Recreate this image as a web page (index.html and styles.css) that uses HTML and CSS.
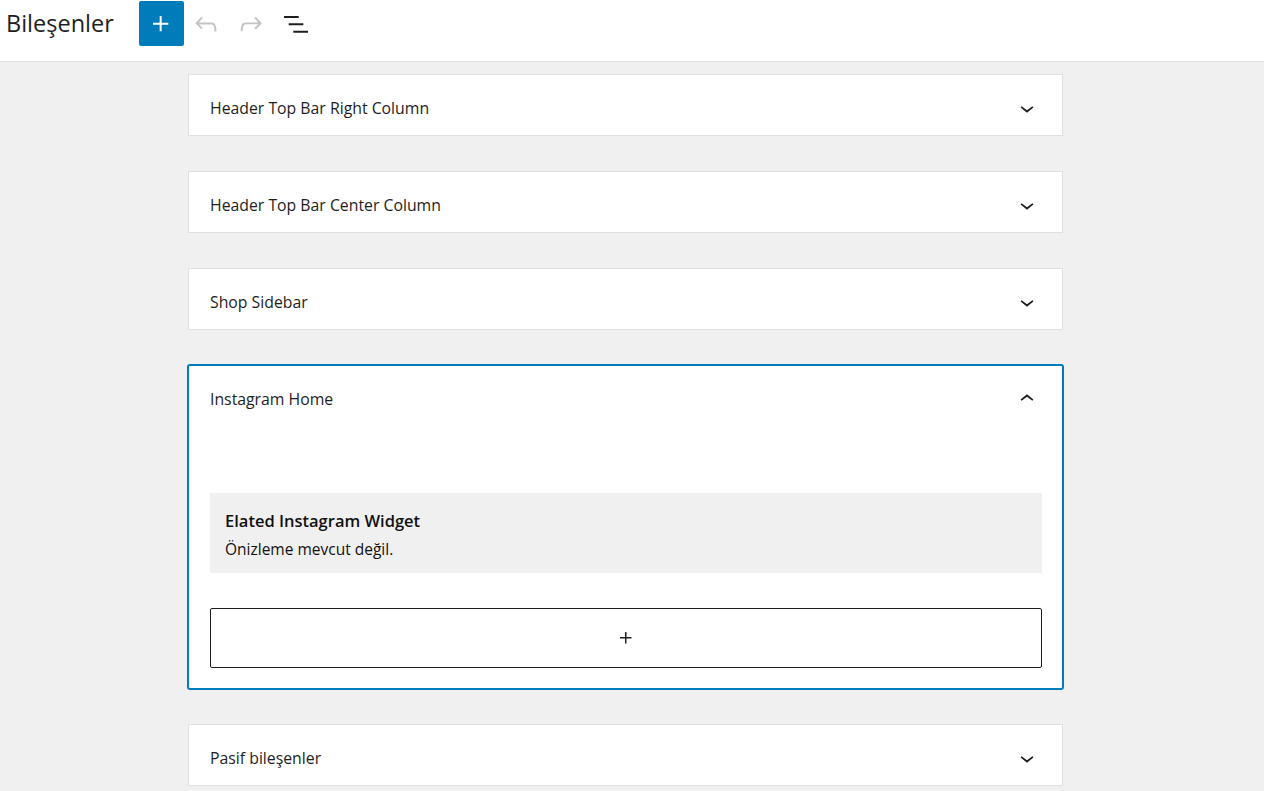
FILE: index.html
```html
<!DOCTYPE html>
<html lang="tr">
<head>
<meta charset="utf-8">
<title>Bileşenler</title>
<link rel="stylesheet" href="styles.css">
</head>
<body>
<header class="topbar">
  <h1 class="topbar-title">Bileşenler</h1>
  <div class="toolbar">
    <button class="tool tool-add" aria-label="Blok ekle">
      <svg viewBox="0 0 24 24" width="32" height="32"><path d="M11 12.5V17.5H12.5V12.5H17.5V11H12.5V6H11V11H6V12.5H11Z"/></svg>
    </button>
    <button class="tool tool-muted" aria-label="Geri al">
      <svg viewBox="0 0 24 24" width="32" height="32"><path d="M18.3 11.7c-.6-.6-1.4-.9-2.3-.9H6.7l2.9-3.3-1.1-1-4.5 5L8.5 16l1-1-2.7-2.7H16c.5 0 .9.2 1.3.5 1 1 1 3.4 1 4.5v.3h1.5v-.2c0-1.5 0-4.3-1.5-5.7z"/></svg>
    </button>
    <button class="tool tool-muted" aria-label="Yinele">
      <svg viewBox="0 0 24 24" width="32" height="32"><path d="M15.6 6.5l-1.1 1 2.9 3.3H8c-.9 0-1.7.3-2.3.9-1.4 1.5-1.4 4.2-1.4 5.6v.2h1.5v-.3c0-1.1 0-3.5 1-4.5.3-.3.7-.5 1.3-.5h9.2L14.5 15l1.1 1.1 4.6-4.6-4.6-5z"/></svg>
    </button>
    <button class="tool" aria-label="Liste görünümü">
      <svg viewBox="0 0 24 24" width="32" height="32"><path d="M3 6h11v1.5H3V6Zm3.5 5.5h11V13h-11v-1.5ZM21 17H10v1.5h11V17Z"/></svg>
    </button>
  </div>
</header>

<main class="editor">
  <div class="areas">
    <section class="area">
      <div class="area-head">
        <span class="area-title">Header Top Bar Right Column</span>
        <svg class="chevron" viewBox="0 0 24 24"><path d="M17.5 11.6L12 16l-5.5-4.4.9-1.2L12 14l4.6-3.6 1 1.2z"/></svg>
      </div>
    </section>

    <section class="area">
      <div class="area-head">
        <span class="area-title">Header Top Bar Center Column</span>
        <svg class="chevron" viewBox="0 0 24 24"><path d="M17.5 11.6L12 16l-5.5-4.4.9-1.2L12 14l4.6-3.6 1 1.2z"/></svg>
      </div>
    </section>

    <section class="area">
      <div class="area-head">
        <span class="area-title">Shop Sidebar</span>
        <svg class="chevron" viewBox="0 0 24 24"><path d="M17.5 11.6L12 16l-5.5-4.4.9-1.2L12 14l4.6-3.6 1 1.2z"/></svg>
      </div>
    </section>

    <section class="area area-open">
      <div class="area-head">
        <span class="area-title">Instagram Home</span>
        <svg class="chevron" viewBox="0 0 24 24"><path d="M6.5 12.4L12 8l5.5 4.4-.9 1.2L12 10l-4.6 3.6-1-1.2z"/></svg>
      </div>
      <div class="area-body">
        <div class="widget-preview">
          <div class="widget-name">Elated Instagram Widget</div>
          <div class="widget-note">Önizleme mevcut değil.</div>
        </div>
        <button class="appender" aria-label="Blok ekle">
          <svg viewBox="0 0 24 24" width="24" height="24"><path d="M11 12.5V17.5H12.5V12.5H17.5V11H12.5V6H11V11H6V12.5H11Z"/></svg>
        </button>
      </div>
    </section>

    <section class="area">
      <div class="area-head">
        <span class="area-title">Pasif bileşenler</span>
        <svg class="chevron" viewBox="0 0 24 24"><path d="M17.5 11.6L12 16l-5.5-4.4.9-1.2L12 14l4.6-3.6 1 1.2z"/></svg>
      </div>
    </section>
  </div>
</main>
</body>
</html>
```

FILE: styles.css
```css
* {
  box-sizing: border-box;
}

html,
body {
  margin: 0;
  height: 100%;
}

body {
  font-family: "Open Sans", "Noto Sans", "Liberation Sans", sans-serif;
  color: #1e1e1e;
  background: #f0f0f0;
  overflow: hidden;
}

/* Top toolbar */
.topbar {
  height: 62px;
  background: #fff;
  border-bottom: 1px solid #e0e0e0;
  display: flex;
  align-items: flex-start;
  padding: 1px 0 0 6px;
}

.topbar-title {
  margin: 0;
  height: 45px;
  line-height: 45px;
  font-size: 23.5px;
  font-weight: 400;
  color: #1e1e1e;
}

.toolbar {
  display: flex;
  align-items: center;
  height: 45px;
  margin-left: 25px;
}

.tool {
  width: 45px;
  height: 45px;
  padding: 0;
  border: 0;
  border-radius: 2px;
  background: transparent;
  display: flex;
  align-items: center;
  justify-content: center;
  fill: #1e1e1e;
}

.tool-add {
  background: #007cba;
  fill: #fff;
}

.tool-muted {
  fill: #c3c4c7;
}

/* Widget areas */
.editor {
  padding: 12px 0 0 188px;
}

.areas {
  width: 875px;
  display: flex;
  flex-direction: column;
  gap: 35px;
}

.area {
  background: #fff;
  border: 1px solid #e0e0e0;
}

.area-open {
  border-color: #007cba;
  border-radius: 2px;
  box-shadow: 0 0 0 1px #007cba;
}

.area-head {
  display: flex;
  align-items: center;
  justify-content: space-between;
  padding: 23px 20px 17px 21px;
  height: 60px;
}

.area-title {
  font-size: 15.8px;
  font-weight: 500;
  line-height: 20px;
  color: #1e1e1e;
}

.chevron {
  width: 28px;
  height: 28px;
  fill: #1e1e1e;
  margin-right: 1px;
  margin-top: -1px;
}

.area-body {
  padding: 67px 20px 20px 21px;
}

.widget-preview {
  background: #f0f0f0;
  height: 80px;
  padding: 16px 15px 0;
}

.widget-name {
  font-size: 16.5px;
  font-weight: 600;
  line-height: 24px;
  color: #111;
}

.widget-note {
  font-size: 15.5px;
  line-height: 24px;
  margin-top: 4px;
  color: #111;
}

.appender {
  display: flex;
  align-items: center;
  justify-content: center;
  width: 100%;
  height: 60px;
  margin-top: 35px;
  padding: 0;
  background: #fff;
  border: 1px solid #1e1e1e;
  border-radius: 2px;
  fill: #1e1e1e;
}
```
